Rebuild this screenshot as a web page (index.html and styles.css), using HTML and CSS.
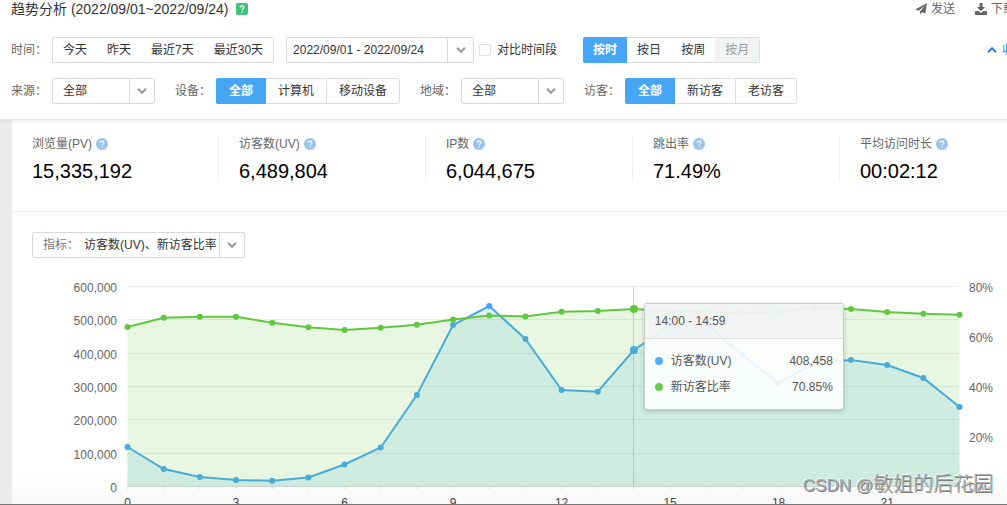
FILE: index.html
```html
<!DOCTYPE html>
<html lang="zh-CN">
<head>
<meta charset="utf-8">
<title>趋势分析</title>
<link rel="stylesheet" href="styles.css">
</head>
<body>
<svg class="defs" aria-hidden="true">
  <symbol id="chevron" viewBox="0 0 10 8"><path d="M1 1.8 5 5.8 9 1.8" fill="none" stroke="currentColor" stroke-width="2"/></symbol>
  <symbol id="help" viewBox="0 0 12 12"><circle cx="6" cy="6" r="6" fill="#98c4ef"/><path d="M4.3 4.7C4.3 2.5 7.8 2.5 7.8 4.6 7.8 5.9 6.1 5.9 6.1 7.3M6.1 8.4V9.6" fill="none" stroke="#fff" stroke-width="1.2"/></symbol>
</svg>

<header class="header">
  <div class="title-row">
    <h1 class="title">趋势分析 (2022/09/01~2022/09/24)</h1>
    <button class="tip" type="button" aria-label="帮助"><svg viewBox="0 0 12 12"><rect width="12" height="12" rx="2" fill="#3ec27c"/><path d="M4.1 4.6C4.1 2.3 7.9 2.3 7.9 4.5 7.9 6 6.1 5.9 6.1 7.4M6.1 8.5V9.8" fill="none" stroke="#fff" stroke-width="1.2"/></svg></button>
    <nav class="tools">
      <a class="tool" href="#"><svg viewBox="0 0 12 12"><path d="M12 0 10.3 10.6 6.9 9.2 5 11.5V8.4L10.4 2 3.7 7.8.3 6.4Z" fill="currentColor"/></svg>发送</a>
      <a class="tool" href="#"><svg viewBox="0 0 12 12"><path d="M4.5 0H7.5V4H10.2L6 8.2 1.8 4H4.5ZM.6 8H3.6L6 10 8.4 8H11.4Q12 8 12 8.6V11.4Q12 12 11.4 12H.6Q0 12 0 11.4V8.6Q0 8 .6 8Z" fill="currentColor"/></svg>下载</a>
    </nav>
  </div>

  <div class="filters">
    <span class="label">时间：</span>
    <div class="group group-flat">
      <button type="button">今天</button><button type="button">昨天</button><button type="button">最近7天</button><button type="button">最近30天</button>
    </div>
    <button class="picker picker-date" type="button"><span class="picker-text">2022/09/01 - 2022/09/24</span><span class="arrow"><svg><use href="#chevron"/></svg></span></button>
    <label class="compare"><input type="checkbox">对比时间段</label>
    <div class="group group-flat group-unit">
      <button class="active" type="button">按时</button><button type="button">按日</button><button type="button">按周</button><button type="button" disabled>按月</button>
    </div>
    <a class="collapse" href="#"><svg class="flip"><use href="#chevron"/></svg>收起</a>
  </div>

  <div class="filters filters-second">
    <label class="label" for="source">来源：</label>
    <span class="picker"><select id="source"><option>全部</option></select><span class="arrow"><svg><use href="#chevron"/></svg></span></span>
    <span class="label">设备：</span>
    <div class="group group-split">
      <button class="active" type="button">全部</button><button type="button">计算机</button><button type="button">移动设备</button>
    </div>
    <label class="label" for="region">地域：</label>
    <span class="picker"><select id="region"><option>全部</option></select><span class="arrow"><svg><use href="#chevron"/></svg></span></span>
    <span class="label">访客：</span>
    <div class="group group-split">
      <button class="active" type="button">全部</button><button type="button">新访客</button><button type="button">老访客</button>
    </div>
  </div>
</header>

<main class="panel">
  <section class="stats">
    <div class="stat"><div class="stat-name">浏览量(PV)<svg><use href="#help"/></svg></div><div class="stat-value">15,335,192</div></div>
    <div class="stat"><div class="stat-name">访客数(UV)<svg><use href="#help"/></svg></div><div class="stat-value">6,489,804</div></div>
    <div class="stat"><div class="stat-name">IP数<svg><use href="#help"/></svg></div><div class="stat-value">6,044,675</div></div>
    <div class="stat"><div class="stat-name">跳出率<svg><use href="#help"/></svg></div><div class="stat-value">71.49%</div></div>
    <div class="stat"><div class="stat-name">平均访问时长<svg><use href="#help"/></svg></div><div class="stat-value">00:02:12</div></div>
  </section>

  <div class="metric-row">
    <button class="picker picker-metric" type="button"><span class="picker-text"><span class="muted">指标：</span>访客数(UV)、新访客比率</span><span class="arrow"><svg><use href="#chevron"/></svg></span></button>
  </div>

  <figure class="chart">
    <svg id="plot" class="plot" viewBox="12 270 995 235" role="img" aria-label="访客数与新访客比率"></svg>
    <div class="tooltip">
      <div class="tooltip-head">14:00 - 14:59</div>
      <div class="tooltip-body">
        <div class="tooltip-row"><i class="dot dot-blue"></i><span>访客数(UV)</span><b>408,458</b></div>
        <div class="tooltip-row"><i class="dot dot-green"></i><span>新访客比率</span><b>70.85%</b></div>
      </div>
    </div>
  </figure>
</main>
<div class="watermark"><span class="watermark-site">CSDN @</span>敏姐的后花园</div>
<script src="chart.js"></script>
</body>
</html>
```
FILE: styles.css
```css
* { box-sizing: border-box; }

body {
  margin: 0;
  height: 100vh;
  overflow: hidden;
  position: relative;
  display: flex;
  flex-direction: column;
  background: #ebebeb;
  color: #333;
  font: 12px/16px "Liberation Sans", "Noto Sans CJK SC", sans-serif;
  border-bottom: 1px solid #777;
}

button, select, input { font: inherit; color: inherit; margin: 0; }
button { padding: 0; border: 0; background: none; white-space: nowrap; }
a { color: inherit; text-decoration: none; }
.defs { display: none; }

.header {
  position: relative;
  flex: none;
  padding: 0 0 15px 11px;
  background: #fff;
  border-bottom: 1px solid #e6e6e6;
  box-shadow: 0 1px 3px rgba(0, 0, 0, .08);
}

.title-row { display: flex; align-items: center; height: 18px; }
.title { margin: 0; font-size: 14px; font-weight: 400; line-height: 18px; white-space: nowrap; }
.tip { display: flex; margin-left: 7px; }
.tip svg { width: 12px; height: 12px; }
.tools { display: flex; gap: 20px; margin-left: auto; margin-right: -8px; color: #666; }
.tool { display: flex; align-items: center; gap: 4px; white-space: nowrap; }
.tool svg { width: 12px; height: 12px; }

.filters { display: flex; align-items: center; height: 26px; margin-top: 19px; white-space: nowrap; }
.filters-second { margin-top: 15px; }
.label { width: 41px; flex: none; color: #666; }
.group + .label, .picker + .label { margin-left: 20px; }

.group { display: flex; flex: none; height: 26px; border: 1px solid #ddd; border-radius: 2px; }
.group button { padding: 0 10px; }
.group .active { margin: -1px 0 -1px -1px; background: #46a6f5; color: #fff; font-weight: 700; border-radius: 2px 0 0 2px; }
.group button:disabled { background: #f2f4f4; color: #999; }
.group-unit { margin-left: 26px; }
.group-split button { padding: 0 12px; }
.group-split .active { padding: 0 13px; }
.group-split button:last-child { border-left: 1px solid #ddd; }

.picker {
  display: flex;
  flex: none;
  width: 103px;
  height: 26px;
  border: 1px solid #d9d9d9;
  border-radius: 2px;
  background: #fff;
}
.picker select { appearance: none; flex: 1; min-width: 0; padding: 0 10px; border: 0; background: none; }
.picker-text { flex: 1; align-self: center; text-align: left; }
.arrow { display: flex; align-items: center; justify-content: center; width: 25px; flex: none; border-left: 1px solid #d9d9d9; color: #999; }
.arrow svg { width: 10px; height: 8px; }
.picker-date { width: 188px; margin-left: 12px; padding-left: 6px; }
.picker-date .arrow { width: 26px; }
.picker-metric { width: 213px; padding-left: 10px; }
.muted { display: inline-block; width: 41px; color: #777; }

.compare { display: flex; align-items: center; gap: 6px; margin-left: 5px; }
.compare input { appearance: none; width: 12px; height: 12px; border: 1px solid #ddd; border-radius: 2px; background: #fff; }
.collapse { display: flex; align-items: center; gap: 5px; margin-left: auto; margin-right: -19px; color: #2288ee; }
.collapse svg { width: 10px; height: 8px; }
.flip { transform: rotate(180deg); }

.panel { flex: 1; margin-left: 12px; background: #fff; min-width: 0; }

.stats {
  display: grid;
  grid-template-columns: repeat(5, 1fr);
  margin-right: -40px;
  padding: 16px 0 30px;
  border-bottom: 1px solid #ededed;
}
.stat { height: 45px; padding-left: 20px; border-right: 1px solid #eee; white-space: nowrap; }
.stat-name { display: flex; align-items: center; gap: 4px; height: 16px; color: #666; }
.stat-name svg { width: 12px; height: 12px; }
.stat-value { margin-top: 8px; font-size: 20px; line-height: 22px; color: #000; }

.metric-row { display: flex; padding: 20px 20px 12px; }

.chart { position: relative; margin: 0; background: linear-gradient(#fff 85%, #f8f8f8); }
.plot { display: block; width: 100%; height: auto; }
.plot text { font-size: 12px; fill: #666; }
.plot .x-label { fill: #444; text-anchor: middle; }
.plot .y-label { text-anchor: end; }
.grid { stroke: #ececec; }
.axis { stroke: #ddd; }
.pointer { stroke: #d2d2d2; }
.line { fill: none; stroke-width: 2; }
.blue .line { stroke: #46a6f5; }
.blue circle, .blue .area { fill: #46a6f5; }
.green .line { stroke: #61c73f; }
.green circle, .green .area { fill: #61c73f; }
.plot .area { fill-opacity: .15; }

.tooltip {
  position: absolute;
  left: 63.5%;
  top: 33px;
  width: 200px;
  border: 1px solid #ccc;
  border-radius: 3px;
  box-shadow: 0 1px 4px rgba(0, 0, 0, .2);
  background: rgba(255, 255, 255, .88);
  color: #555;
}
.tooltip-head { padding: 9px 10px; background: rgba(232, 235, 235, .55); border-bottom: 1px solid #ddd; }
.tooltip-body { display: grid; gap: 10px; padding: 14px 10px; }
.tooltip-row { display: flex; align-items: center; gap: 8px; }
.tooltip-row b { margin-left: auto; font-weight: 400; }
.dot { width: 8px; height: 8px; border-radius: 50%; }
.dot-blue { background: #55adf6; }
.dot-green { background: #6bcb4b; }

.watermark {
  position: absolute;
  right: 14px;
  bottom: 4px;
  font: 20px/28px "Noto Sans CJK SC", sans-serif;
  font-weight: 300;
  color: #aaa;
  text-shadow: 1px 1px 0 #808080, -1px -1px 0 rgba(255, 255, 255, .7);
  white-space: nowrap;
}
.watermark-site { font-family: "Liberation Sans", sans-serif; font-size: 17px; }
```
FILE: chart.js
```js
const plot = document.getElementById('plot');
const left = 127.5, right = 959.5, base = 486.5;
const visitors = [447, 469, 477, 480, 480.7, 477.5, 464.5, 447.5, 395, 325, 306, 339, 390, 391.7, 350, 326, 324, 355, 383, 363, 360, 365, 378, 407];
const ratio = [327, 317.8, 316.8, 316.8, 322.7, 327.2, 330, 327.8, 324.7, 319.5, 315.6, 316.5, 311.8, 311, 309, 311.3, 311.3, 313, 311.5, 308, 309, 312, 313.7, 314.7];
const x = i => left + i * (right - left) / 23;

let out = '';
[286.5, 319.5, 353.5, 386.5, 419.5, 453.5].forEach(y => {
  out += `<path class="grid" d="M${left} ${y}H${right}"/>`;
});
['600,000', '500,000', '400,000', '300,000', '200,000', '100,000', '0'].forEach((t, i) => {
  out += `<text class="y-label" x="117" y="${Math.round(292 + i * 33.33)}">${t}</text>`;
});
['80%', '60%', '40%', '20%', '0%'].forEach((t, i) => {
  out += `<text x="969" y="${292 + i * 50}">${t}</text>`;
});
out += `<path class="axis" d="M${left} ${base}H${right}"/>`;
out += `<path class="pointer" d="M${Math.floor(x(14)) + 0.5} 286V486"/>`;
for (let i = 0; i < 24; i++) {
  const tx = Math.floor(x(i)) + 0.5;
  out += `<path class="axis" d="M${tx} 487V489"/>`;
  if (i % 3 === 0) out += `<text class="x-label" x="${x(i)}" y="507">${i}</text>`;
}
const series = (name, ys) => {
  const d = ys.map((y, i) => `${x(i)} ${y}`).join('L');
  const dots = ys.map((y, i) => `<circle cx="${x(i)}" cy="${y}" r="${i === 14 ? 4 : 3}"/>`).join('');
  return `<g class="${name}"><path class="area" d="M${left} ${base}L${d}V${base}Z"/><path class="line" d="M${d}"/>${dots}</g>`;
};
plot.innerHTML = out + series('blue', visitors) + series('green', ratio);
```
